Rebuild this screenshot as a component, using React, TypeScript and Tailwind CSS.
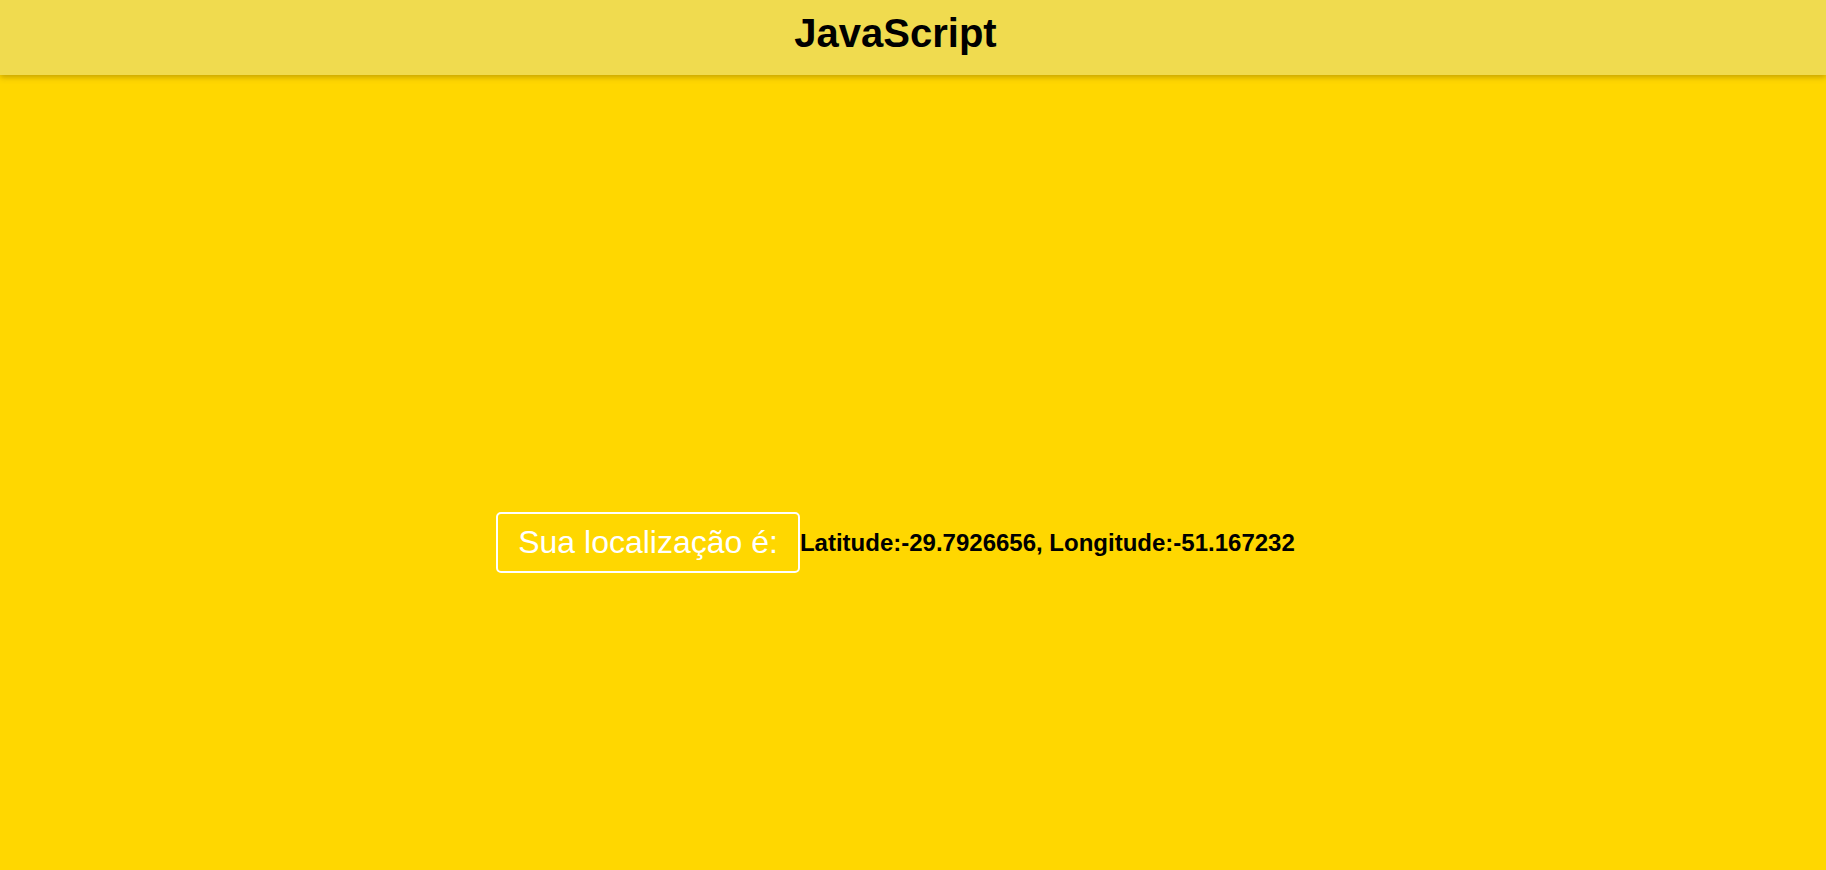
import React from "react";

export default function App() {
  return (
    <div
      className="min-h-[870px] w-full bg-[#ffd700] text-black"
      style={{ fontFamily: '"Liberation Sans", Arial, sans-serif' }}
    >
      <header className="h-[75px] w-full bg-[#f0db4f] shadow-[0_2px_6px_rgba(120,90,0,0.45)] pr-[35px] pt-[10px] relative z-10">
        <h1 className="text-center text-[40px] font-bold leading-[46px]">JavaScript</h1>
      </header>
      <main className="flex justify-center pr-[35px] pt-[437px]">
        <div className="flex items-center">
          <div className="rounded-[5px] border-2 border-white px-[20px] py-[10px] text-[32px] leading-[37px] text-white">
            Sua localização é:
          </div>
          <div className="text-[24px] font-bold leading-[28px]">
            Latitude:-29.7926656, Longitude:-51.167232
          </div>
        </div>
      </main>
    </div>
  );
}
